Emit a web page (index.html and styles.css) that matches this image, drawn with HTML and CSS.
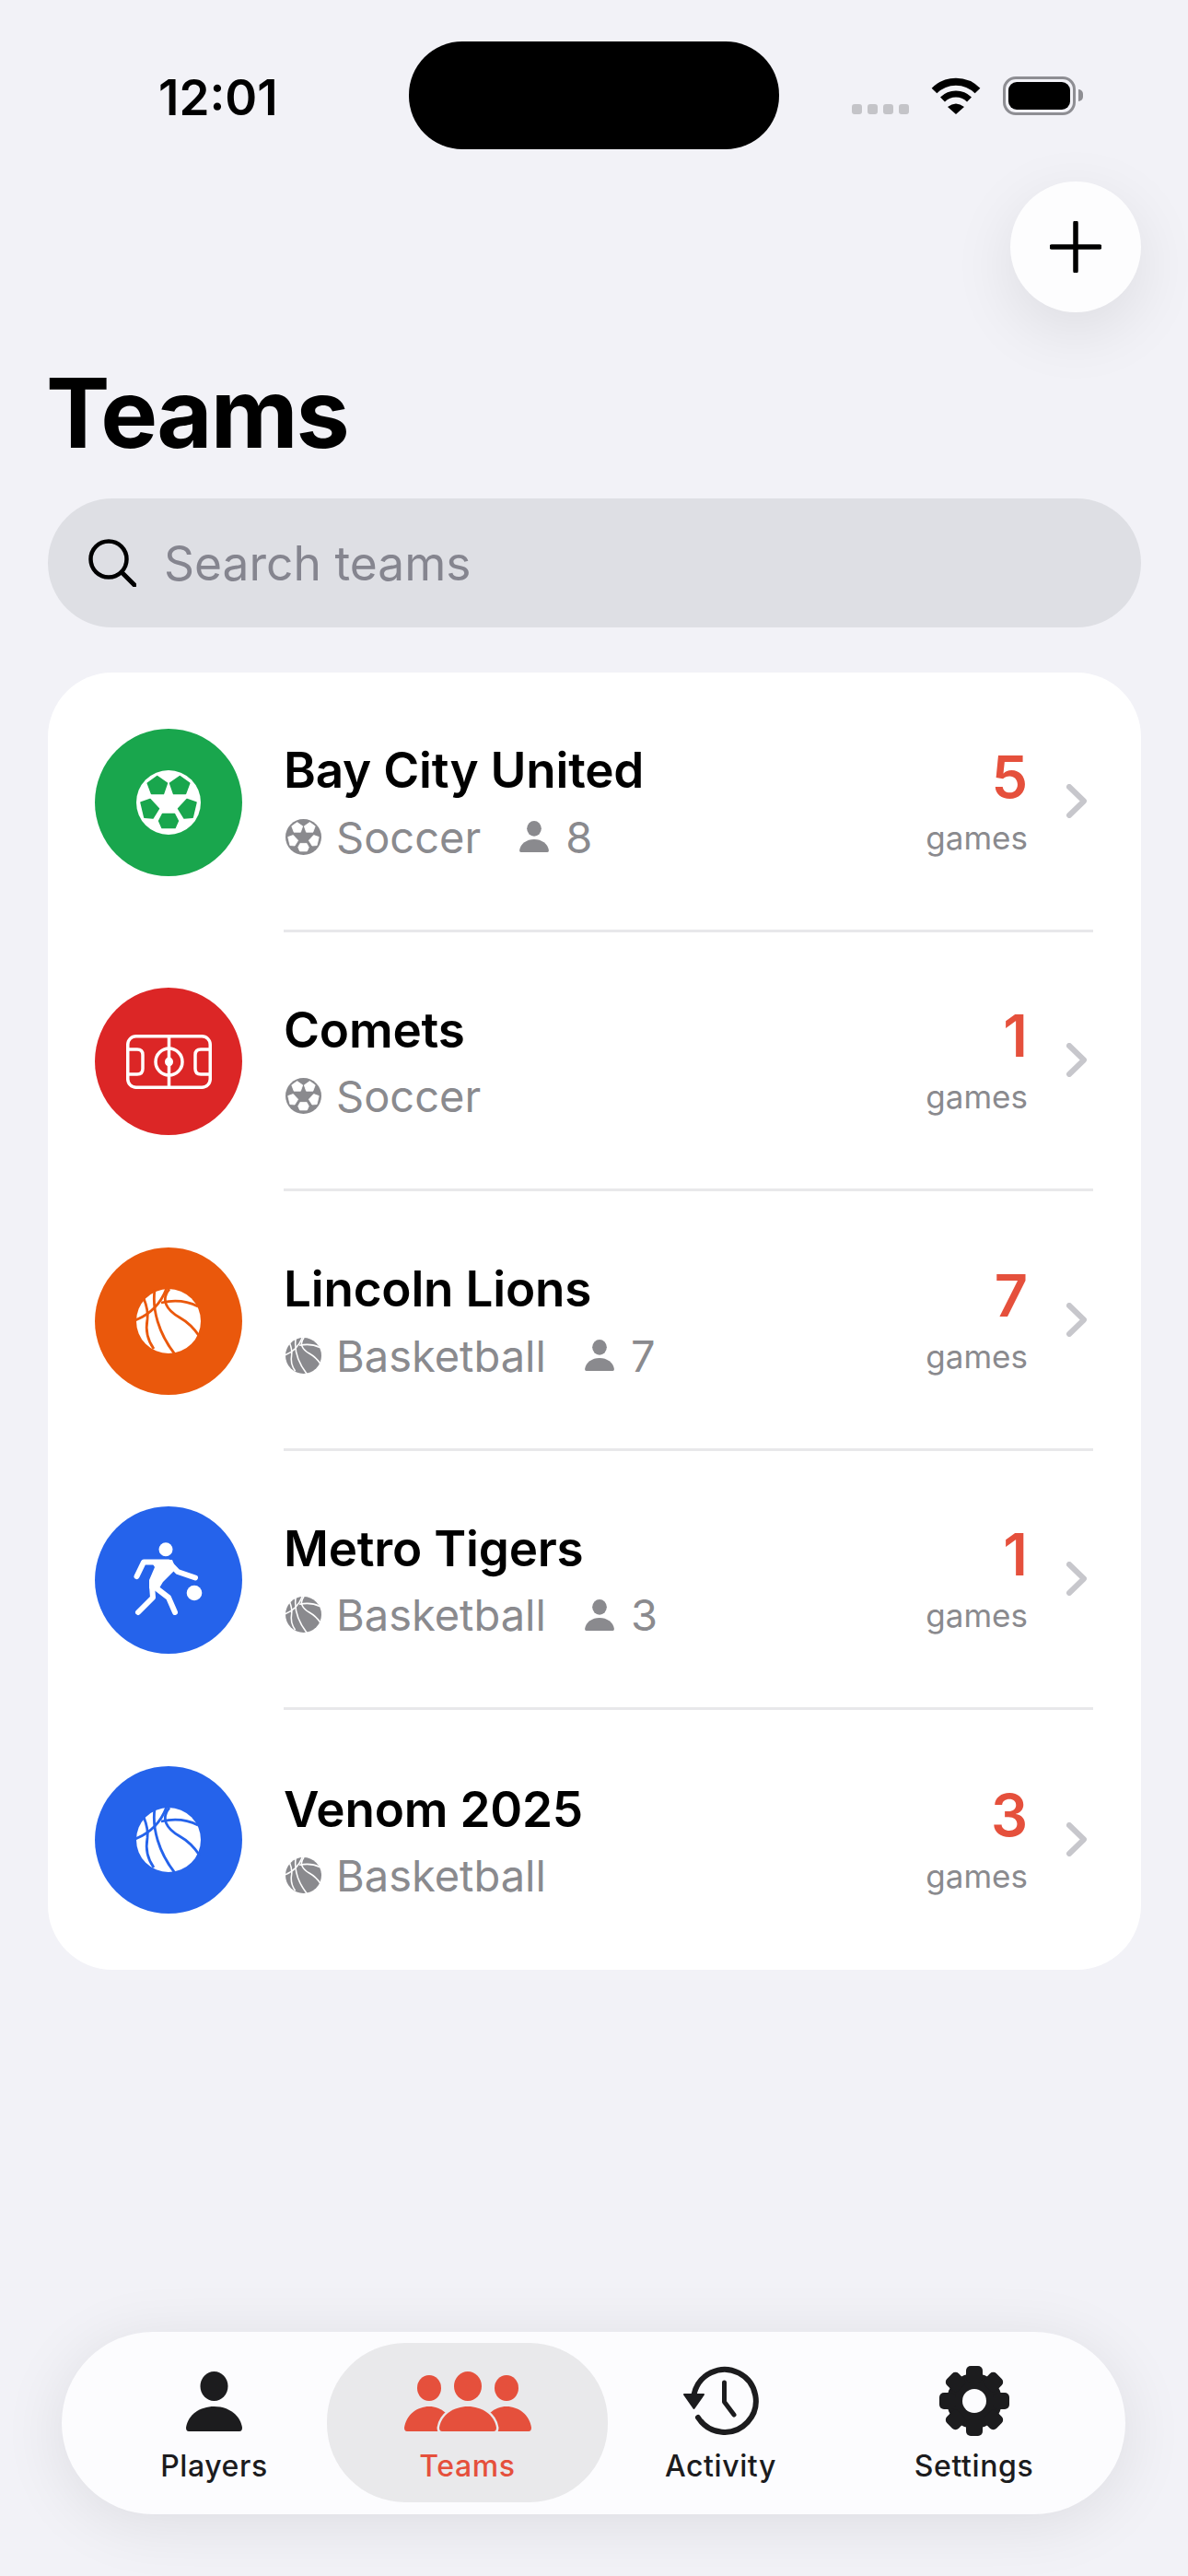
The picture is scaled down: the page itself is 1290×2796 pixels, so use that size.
FILE: index.html
```html
<!DOCTYPE html>
<html lang="en">
<head>
  <meta charset="UTF-8">
  <meta name="viewport" content="width=device-width, initial-scale=1.0">
  <title>Teams</title>
  <link rel="stylesheet" href="styles.css">
</head>
<body>
  <!-- shared icons -->
  <svg class="sprite" xmlns="http://www.w3.org/2000/svg">
    <symbol id="i-soccer" viewBox="0 0 70 70">
      <circle cx="35" cy="35" r="35" fill="currentColor"/>
      <g fill="var(--seam)" stroke="var(--seam)" stroke-width="1.5" stroke-linejoin="round">
        <path d="M22.7 6.5L33.5 14L29.5 25.5L16.5 25.5L12.2 14Z"/>
        <path d="M47.3 6.5L36.5 14L40.5 25.5L53.5 25.5L57.8 14Z"/>
        <path d="M15 31.5L24.5 41.7L18 52L8.8 51.2L5 35Z"/>
        <path d="M55 31.5L45.5 41.7L52 52L61.2 51.2L65 35Z"/>
        <path d="M28.6 47.4L41.4 47.4L45.4 55L42 62.6L28 62.6L24.6 55Z"/>
      </g>
    </symbol>
    <symbol id="i-basket" viewBox="0 0 70 70">
      <circle cx="35" cy="35" r="35" fill="currentColor"/>
      <g fill="none" stroke="var(--seam)" stroke-width="2.8">
        <path d="M-1 34C14 28 26 18 33 -1"/>
        <path d="M20 1C17 22 24 48 42 71"/>
        <path d="M36 0C26 12 33 23 47 31C56 36 63 43 69 52"/>
        <path d="M27 15C40 12 55 13 67 19"/>
        <path d="M8 10C12 20 13 26 12 33C10 44 11 54 19 65"/>
      </g>
    </symbol>
    <symbol id="i-field" viewBox="0 0 93 59">
      <g fill="none" stroke="currentColor" stroke-width="3.5">
        <rect x="1.75" y="1.75" width="89.5" height="55.5" rx="9"/>
        <path d="M46.5 2V57"/>
        <circle cx="46.5" cy="29.5" r="14.5"/>
        <path d="M3 16H12Q18 16 18 22V37Q18 43 12 43H3"/>
        <path d="M90 16H81Q75 16 75 22V37Q75 43 81 43H90"/>
      </g>
      <ellipse cx="46.5" cy="29.5" rx="4.5" ry="5" fill="currentColor"/>
    </symbol>
    <symbol id="i-dribble" viewBox="0 -4 100 100">
      <circle cx="47" cy="12.7" r="7.5" fill="currentColor"/>
      <circle cx="78" cy="60" r="8.3" fill="currentColor"/>
      <path d="M30 24H54L58 34L44 48L38 58L29 55L29 46L35 32Z" fill="currentColor"/>
      <g fill="none" stroke="currentColor" stroke-width="6" stroke-linecap="round" stroke-linejoin="round">
        <path d="M15.5 42L23 26.5H50L60 37L79 43.5"/>
        <path d="M32 52L33 65L17 81"/>
        <path d="M37 55L50 65L57 81"/>
      </g>
    </symbol>
    <symbol id="i-person" viewBox="0 0 61 65">
      <ellipse cx="30.5" cy="16" rx="15" ry="16" fill="currentColor"/>
      <path d="M3 65Q0 65 0 61C2 47 15 38 30.5 38C46 38 59 47 61 61Q61 65 58 65Z" fill="currentColor"/>
    </symbol>
  </svg>

  <div class="status-bar">
    <div class="time">12:01</div>
    <div class="island"></div>
    <div class="status-icons">
      <div class="signal"><span></span><span></span><span></span><span></span></div>
      <svg class="wifi" viewBox="0 0 54 41">
        <path d="M3.5 15.5A33 33 0 0 1 50.5 15.5" fill="none" stroke="#000" stroke-width="8"/>
        <path d="M12.5 25A20.5 20.5 0 0 1 41.5 25" fill="none" stroke="#000" stroke-width="7"/>
        <path d="M18 33Q27 26 36 33L27 41Z" fill="#000"/>
      </svg>
      <div class="battery"><div class="battery-level"></div></div>
      <div class="battery-nub"></div>
    </div>
  </div>

  <div class="add-row">
    <button class="add-btn">
      <svg viewBox="0 0 56 56" width="56" height="56"><path d="M28 2V54M2 28H54" stroke="#000" stroke-width="5.5" stroke-linecap="round"/></svg>
    </button>
  </div>

  <h1 class="page-title">Teams</h1>

  <div class="search">
    <svg class="search-icon" viewBox="0 0 52 52"><circle cx="22" cy="22" r="19.5" fill="none" stroke="#000" stroke-width="4.5"/><path d="M36 36L50 50" stroke="#000" stroke-width="5" stroke-linecap="round"/></svg>
    <span class="search-text">Search teams</span>
  </div>

  <ul class="team-list">
    <li class="team">
      <div class="avatar green"><svg class="glyph-ball"><use href="#i-soccer"/></svg></div>
      <div class="team-body">
        <div class="team-info">
          <div class="team-name">Bay City United</div>
          <div class="team-sub">
            <svg class="sub-icon"><use href="#i-soccer"/></svg><span>Soccer</span>
            <svg class="sub-person"><use href="#i-person"/></svg><span>8</span>
          </div>
        </div>
        <div class="team-count"><div class="count">5</div><div class="count-label">games</div></div>
        <svg class="chevron" viewBox="0 0 22 37"><path d="M3 3L19 18.5L3 34" fill="none" stroke="#c7c7cc" stroke-width="6" stroke-linecap="round" stroke-linejoin="round"/></svg>
      </div>
    </li>
    <li class="team">
      <div class="avatar red"><svg class="glyph-field"><use href="#i-field"/></svg></div>
      <div class="team-body">
        <div class="team-info">
          <div class="team-name">Comets</div>
          <div class="team-sub">
            <svg class="sub-icon"><use href="#i-soccer"/></svg><span>Soccer</span>
          </div>
        </div>
        <div class="team-count"><div class="count">1</div><div class="count-label">games</div></div>
        <svg class="chevron" viewBox="0 0 22 37"><path d="M3 3L19 18.5L3 34" fill="none" stroke="#c7c7cc" stroke-width="6" stroke-linecap="round" stroke-linejoin="round"/></svg>
      </div>
    </li>
    <li class="team">
      <div class="avatar orange"><svg class="glyph-ball"><use href="#i-basket"/></svg></div>
      <div class="team-body">
        <div class="team-info">
          <div class="team-name">Lincoln Lions</div>
          <div class="team-sub">
            <svg class="sub-icon"><use href="#i-basket"/></svg><span>Basketball</span>
            <svg class="sub-person"><use href="#i-person"/></svg><span>7</span>
          </div>
        </div>
        <div class="team-count"><div class="count">7</div><div class="count-label">games</div></div>
        <svg class="chevron" viewBox="0 0 22 37"><path d="M3 3L19 18.5L3 34" fill="none" stroke="#c7c7cc" stroke-width="6" stroke-linecap="round" stroke-linejoin="round"/></svg>
      </div>
    </li>
    <li class="team">
      <div class="avatar blue"><svg class="glyph-dribble"><use href="#i-dribble"/></svg></div>
      <div class="team-body">
        <div class="team-info">
          <div class="team-name">Metro Tigers</div>
          <div class="team-sub">
            <svg class="sub-icon"><use href="#i-basket"/></svg><span>Basketball</span>
            <svg class="sub-person"><use href="#i-person"/></svg><span>3</span>
          </div>
        </div>
        <div class="team-count"><div class="count">1</div><div class="count-label">games</div></div>
        <svg class="chevron" viewBox="0 0 22 37"><path d="M3 3L19 18.5L3 34" fill="none" stroke="#c7c7cc" stroke-width="6" stroke-linecap="round" stroke-linejoin="round"/></svg>
      </div>
    </li>
    <li class="team">
      <div class="avatar blue"><svg class="glyph-ball"><use href="#i-basket"/></svg></div>
      <div class="team-body">
        <div class="team-info">
          <div class="team-name">Venom 2025</div>
          <div class="team-sub">
            <svg class="sub-icon"><use href="#i-basket"/></svg><span>Basketball</span>
          </div>
        </div>
        <div class="team-count"><div class="count">3</div><div class="count-label">games</div></div>
        <svg class="chevron" viewBox="0 0 22 37"><path d="M3 3L19 18.5L3 34" fill="none" stroke="#c7c7cc" stroke-width="6" stroke-linecap="round" stroke-linejoin="round"/></svg>
      </div>
    </li>
  </ul>

  <nav class="tab-bar">
    <a class="tab" href="#">
      <svg class="tab-icon tab-icon-short" width="61" height="65"><use href="#i-person"/></svg>
      <span>Players</span>
    </a>
    <a class="tab active" href="#">
      <svg class="tab-icon tab-icon-short" width="138" height="65" viewBox="0 0 138 65" fill="currentColor">
        <ellipse cx="27" cy="18" rx="13" ry="14"/>
        <ellipse cx="111" cy="18" rx="13" ry="14"/>
        <ellipse cx="69" cy="16" rx="15" ry="16"/>
        <path d="M3 65Q0 65 0 61C2 47 14 38 27 38C40 38 52 47 54 65Z"/>
        <path d="M135 65Q138 65 138 61C136 47 124 38 111 38C98 38 86 47 84 65Z"/>
        <path class="team-front" d="M41 65Q38 65 38 61C40 47 54 38 69 38C84 38 98 47 100 61Q100 65 97 65Z"/>
      </svg>
      <span>Teams</span>
    </a>
    <a class="tab" href="#">
      <svg class="tab-icon" width="86" height="79" viewBox="0 0 86 79">
        <path d="M18 58A34 34 0 1 0 13.5 33" fill="none" stroke="currentColor" stroke-width="6" stroke-linecap="round"/>
        <path d="M3 33H24L13.5 48Z" fill="currentColor" stroke="currentColor" stroke-width="2" stroke-linejoin="round"/>
        <path d="M46.5 20V41L57 55" fill="none" stroke="currentColor" stroke-width="5" stroke-linecap="round" stroke-linejoin="round"/>
      </svg>
      <span>Activity</span>
    </a>
    <a class="tab" href="#">
      <svg class="tab-icon" width="78" height="78" viewBox="0 0 78 78" fill="currentColor">
        <circle cx="39" cy="39" r="30"/>
        <rect x="30" y="1" width="18" height="18" rx="5"/>
        <rect x="30" y="1" width="18" height="18" rx="5" transform="rotate(45 39 39)"/>
        <rect x="30" y="1" width="18" height="18" rx="5" transform="rotate(90 39 39)"/>
        <rect x="30" y="1" width="18" height="18" rx="5" transform="rotate(135 39 39)"/>
        <rect x="30" y="1" width="18" height="18" rx="5" transform="rotate(180 39 39)"/>
        <rect x="30" y="1" width="18" height="18" rx="5" transform="rotate(225 39 39)"/>
        <rect x="30" y="1" width="18" height="18" rx="5" transform="rotate(270 39 39)"/>
        <rect x="30" y="1" width="18" height="18" rx="5" transform="rotate(315 39 39)"/>
        <circle cx="39" cy="39" r="13" fill="#fcfcfe"/>
      </svg>
      <span>Settings</span>
    </a>
  </nav>
</body>
</html>
```
FILE: styles.css
```css
:root {
  --bg-color: #f2f2f7;
  --accent-color: #e5503c;
  --text-color: #000000;
  --muted-color: #8a8a8e;
  --tab-color: #1c1c1e;
  --font-family: Inter, 'Liberation Sans', sans-serif;
}

* {
  box-sizing: border-box;
  margin: 0;
  padding: 0;
}

body {
  width: 1290px;
  height: 2796px;
  overflow: hidden;
  display: flex;
  flex-direction: column;
  padding: 0 51px 67px 52px;
  font-family: var(--font-family);
  color: var(--text-color);
  background-color: var(--bg-color);
}

.sprite {
  display: block;
  width: 0;
  height: 0;
}

/* status bar */
.status-bar {
  display: flex;
  align-items: center;
  padding: 45px 0 0 120px;
}

.time {
  width: 272px;
  margin-top: 5px;
  font-size: 53px;
  font-weight: 600;
  line-height: 112px;
}

.island {
  width: 402px;
  height: 117px;
  border-radius: 58px;
  background-color: #000;
}

.status-icons {
  display: flex;
  align-items: center;
  margin-left: 79px;
}

.signal {
  display: flex;
  gap: 6px;
  align-self: flex-end;
  margin: 0 24px 1px 0;
}

.signal span {
  width: 11px;
  height: 11px;
  border-radius: 3px;
  background-color: #c4c4c8;
}

.wifi {
  width: 54px;
  height: 41px;
  margin-right: 24px;
}

.battery {
  width: 79px;
  height: 42px;
  padding: 3px;
  border: 3px solid #8e8e93;
  border-radius: 14px;
}

.battery-level {
  width: 100%;
  height: 100%;
  border-radius: 9px;
  background-color: #000;
}

.battery-nub {
  width: 5px;
  height: 13px;
  margin-left: 3px;
  border-radius: 0 5px 5px 0;
  background-color: #8e8e93;
}

/* header */
.add-row {
  display: flex;
  justify-content: flex-end;
  margin-top: 35px;
}

.add-btn {
  display: flex;
  align-items: center;
  justify-content: center;
  width: 142px;
  height: 142px;
  border: none;
  border-radius: 50%;
  background-color: #fdfdfe;
  box-shadow: 0 20px 70px rgba(0, 0, 0, 0.09);
}

.page-title {
  margin: 49px 0 33px -2px;
  font-size: 104px;
  font-weight: 700;
  line-height: 120px;
  letter-spacing: -2px;
}

.search {
  display: flex;
  align-items: center;
  height: 140px;
  padding-left: 44px;
  border-radius: 70px;
  background-color: #dedfe4;
}

.search-icon {
  width: 52px;
  height: 52px;
  margin-right: 30px;
}

.search-text {
  font-size: 51.5px;
  color: #85858f;
}

/* team list */
.team-list {
  margin-top: 49px;
  padding-left: 51px;
  padding-right: 52px;
  border-radius: 70px;
  list-style: none;
  background-color: #ffffff;
}

.team {
  display: flex;
  align-items: center;
  height: 281.5px;
}

.avatar {
  display: flex;
  flex-shrink: 0;
  align-items: center;
  justify-content: center;
  width: 160px;
  height: 160px;
  margin-right: 45px;
  border-radius: 50%;
  color: #ffffff;
}

.green { background-color: #19a64d; --seam: #19a64d; }
.red { background-color: #dc2626; --seam: #dc2626; }
.orange { background-color: #ea580c; --seam: #ea580c; }
.blue { background-color: #2563eb; --seam: #2563eb; }

.glyph-ball { width: 70px; height: 70px; }
.glyph-field { width: 93px; height: 59px; }
.glyph-dribble { width: 100px; height: 100px; }

.team-body {
  display: flex;
  flex: 1;
  align-items: center;
  height: 100%;
  padding-right: 7px;
  border-bottom: 3px solid #e8e8ea;
}

.team:last-child .team-body {
  border-bottom: none;
}

.team-info {
  flex: 1;
  padding-top: 6px;
}

.team-name {
  font-size: 53px;
  font-weight: 600;
  line-height: 66px;
  letter-spacing: -0.2px;
}

.team-sub {
  display: flex;
  align-items: center;
  height: 66px;
  margin-top: 6px;
  font-size: 47px;
  color: var(--muted-color);
  --seam: #ffffff;
}

.sub-icon {
  width: 39px;
  height: 39px;
  margin: 0 16px 0 2px;
}

.sub-person {
  width: 32px;
  height: 34px;
  margin: 0 18px 0 42px;
}

.team-count {
  margin-right: 42px;
  text-align: right;
}

.count {
  font-size: 63px;
  font-weight: 600;
  line-height: 72px;
  color: var(--accent-color);
}

.count-label {
  margin-top: 7px;
  font-size: 35px;
  line-height: 46px;
  color: var(--muted-color);
}

.chevron {
  width: 22px;
  height: 37px;
}

/* tab bar */
.tab-bar {
  display: grid;
  grid-template-columns: repeat(4, 275px);
  height: 198px;
  margin: auto 17px 0 15px;
  padding: 12px 27px 13px 28px;
  border-radius: 99px;
  background-color: #fcfcfe;
  box-shadow: 0 10px 70px rgba(0, 0, 0, 0.09);
}

.tab {
  display: flex;
  flex-direction: column;
  align-items: center;
  justify-content: flex-end;
  padding-bottom: 20px;
  font-size: 32px;
  font-weight: 500;
  letter-spacing: 0.6px;
  color: var(--tab-color);
  text-decoration: none;
}

.tab-icon {
  margin-bottom: 12px;
}

.tab-icon-short {
  margin-bottom: 18px;
}

.active {
  margin: 0 -15px;
  border-radius: 85px;
  background-color: #e9e9eb;
  color: var(--accent-color);
}

.team-front {
  stroke: #e9e9eb;
  stroke-width: 5;
  paint-order: stroke;
}
```
